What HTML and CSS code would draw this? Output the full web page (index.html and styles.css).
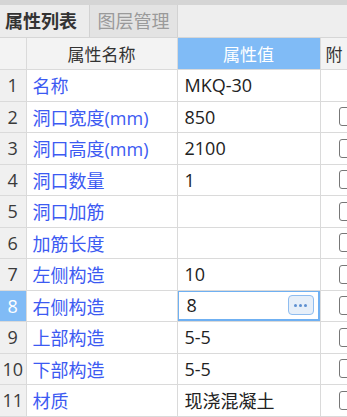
FILE: index.html
```html
<!DOCTYPE html>
<html lang="zh-CN">
<head>
    <meta charset="UTF-8">
    <title>属性列表</title>
    <link rel="stylesheet" href="styles.css">
</head>
<body>
    <div class="panel">
        <div class="tabs">
            <div class="tab active">属性列表</div>
            <div class="tab">图层管理</div>
        </div>
        <table class="grid">
            <colgroup>
                <col class="c-num">
                <col class="c-name">
                <col class="c-value">
                <col class="c-extra">
            </colgroup>
            <thead>
                <tr>
                    <th class="num"></th>
                    <th>属性名称</th>
                    <th class="current">属性值</th>
                    <th class="extra">附</th>
                </tr>
            </thead>
            <tbody>
                <tr><td class="num">1</td><td class="name">名称</td><td class="value">MKQ-30</td><td></td></tr>
                <tr><td class="num">2</td><td class="name">洞口宽度(mm)</td><td class="value">850</td><td><span class="check"></span></td></tr>
                <tr><td class="num">3</td><td class="name">洞口高度(mm)</td><td class="value">2100</td><td><span class="check"></span></td></tr>
                <tr><td class="num">4</td><td class="name">洞口数量</td><td class="value">1</td><td><span class="check"></span></td></tr>
                <tr><td class="num">5</td><td class="name">洞口加筋</td><td class="value"></td><td><span class="check"></span></td></tr>
                <tr><td class="num">6</td><td class="name">加筋长度</td><td class="value"></td><td><span class="check"></span></td></tr>
                <tr><td class="num">7</td><td class="name">左侧构造</td><td class="value">10</td><td><span class="check"></span></td></tr>
                <tr class="selected">
                    <td class="num">8</td>
                    <td class="name">右侧构造</td>
                    <td class="value editing">
                        <div class="editor">
                            <span>8</span>
                            <span class="more"><i></i><i></i><i></i></span>
                        </div>
                    </td>
                    <td><span class="check"></span></td>
                </tr>
                <tr><td class="num">9</td><td class="name">上部构造</td><td class="value">5-5</td><td><span class="check"></span></td></tr>
                <tr><td class="num">10</td><td class="name">下部构造</td><td class="value">5-5</td><td><span class="check"></span></td></tr>
                <tr><td class="num">11</td><td class="name">材质</td><td class="value">现浇混凝土</td><td><span class="check"></span></td></tr>
            </tbody>
        </table>
    </div>
</body>
</html>
```

FILE: styles.css
```css
body {
    margin: 0;
    padding: 0;
    background-color: #ffffff;
    font-family: "Open Sans", "Noto Sans CJK SC", sans-serif;
    color: #222;
    overflow: hidden;
}
.panel {
    width: 347px;
    height: 417px;
    overflow: hidden;
    border-top: 5px solid #d5d5d5;
    box-sizing: border-box;
}
.tabs {
    display: flex;
    height: 33px;
    background-color: #eeeeee;
    border-bottom: 1px solid #d6d6d6;
    box-sizing: border-box;
}
.tab {
    font-size: 18px;
    line-height: 32px;
    color: #9a9a9a;
    background-color: #e3e3e3;
    border-right: 1px solid #d2d2d2;
    width: 87px;
    text-align: center;
}
.tab.active {
    color: #333;
    font-weight: bold;
    background-color: #ececec;
    width: 84px;
    text-align: left;
    padding-left: 5px;
}
.grid {
    border-collapse: collapse;
    table-layout: fixed;
    width: 360px;
    font-size: 18px;
}
.c-num { width: 26px; }
.c-name { width: 151px; }
.c-value { width: 143px; }
.c-extra { width: 40px; }
.grid th,
.grid td {
    border: 1px solid #dadada;
    height: 30.5px;
    padding: 0;
    white-space: nowrap;
    overflow: hidden;
}
.grid tr:first-child th { border-top: none; }
.grid th:first-child,
.grid td:first-child { border-left: none; }
.grid th {
    background-color: #f3f3f3;
    font-weight: normal;
    color: #333;
    height: 31px;
    font-size: 17px;
}
.grid th.current {
    background-color: #80bbf6;
    color: #ffffff;
}
.grid th.extra {
    text-align: left;
    padding-left: 5px;
}
.grid td.num {
    background-color: #f0f0f0;
    text-align: center;
    color: #3a3a3a;
}
.grid td.name {
    color: #3c5af2;
    padding-left: 6px;
}
.grid td.value {
    padding-left: 7px;
}
.grid tr.selected td.num {
    background-color: #80bbf6;
    color: #ffffff;
}
.grid td.editing {
    padding: 0;
}
.editor {
    display: flex;
    align-items: center;
    justify-content: space-between;
    height: 31px;
    border: 2px solid #6fb0f2;
    box-sizing: border-box;
    padding: 0 4px 0 8px;
    margin: -1px 0 0 -1px;
}
.more {
    display: flex;
    align-items: center;
    justify-content: center;
    gap: 2px;
    width: 24px;
    height: 18px;
    border: 1px solid #8fbdf0;
    border-radius: 4px;
    background-color: #e6eff9;
}
.more i {
    width: 3px;
    height: 3px;
    border-radius: 50%;
    background-color: #5d8fd0;
}
.check {
    display: block;
    width: 16px;
    height: 17px;
    margin-left: 18px;
    border: 1px solid #777;
    border-radius: 3px;
}
```
